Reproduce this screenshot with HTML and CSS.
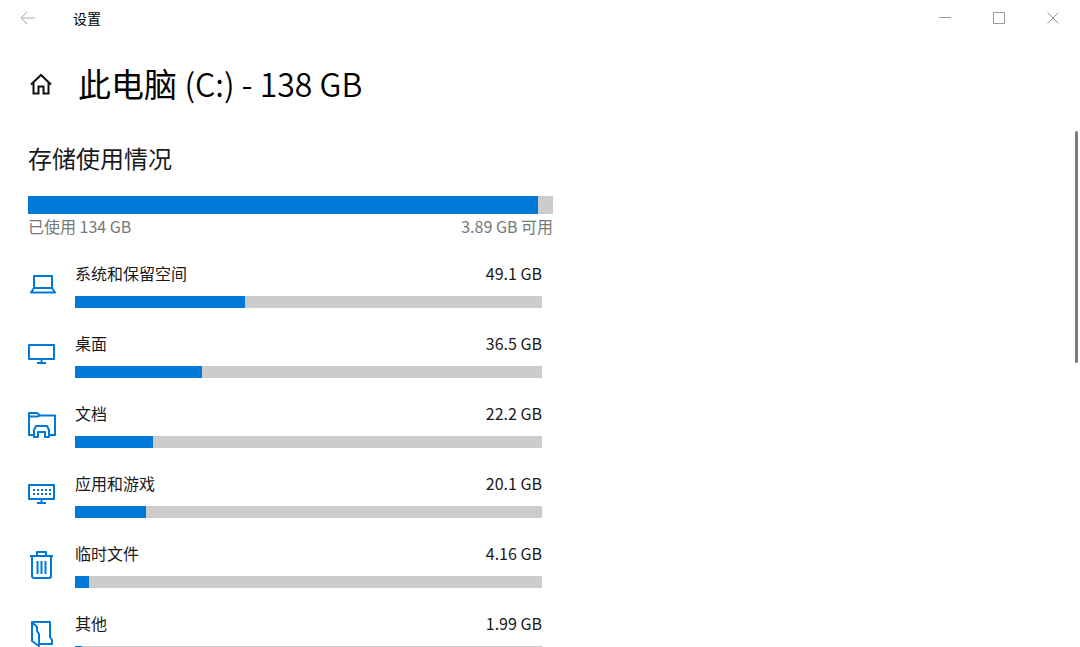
FILE: index.html
```html
<!DOCTYPE html>
<html lang="zh-CN">
<head>
    <meta charset="UTF-8">
    <meta name="viewport" content="width=device-width, initial-scale=1.0">
    <title>设置</title>
    <link rel="stylesheet" href="styles.css">
</head>
<body>
    <header class="titlebar">
        <button class="back" aria-label="返回">
            <svg width="16" height="14" viewBox="0 0 16 14"><path d="M15 7H1M7 1L1 7l6 6"/></svg>
        </button>
        <span class="app-name">设置</span>
        <div class="window-buttons">
            <button aria-label="最小化">
                <svg width="12" height="12" viewBox="0 0 12 12"><path d="M0 5.500h12"/></svg>
            </button>
            <button aria-label="最大化">
                <svg width="12" height="12" viewBox="0 0 12 12"><path d="M.5.5h11v11H.5z"/></svg>
            </button>
            <button aria-label="关闭">
                <svg width="12" height="12" viewBox="0 0 12 12"><path d="M.5.5l11 11M11.500.5l-11 11"/></svg>
            </button>
        </div>
    </header>

    <div class="page-header">
        <a href="#" class="home" aria-label="主页">
            <svg width="22" height="24" viewBox="0 0 22 24"><path d="M1 13.500L11 4l10 9.500M3.500 11.500v11h5v-7h5v7h5v-11"/></svg>
        </a>
        <h1>此电脑 <span class="latin">(C:) - 138 GB</span></h1>
    </div>

    <div class="content">
        <main class="storage">
            <h2>存储使用情况</h2>
            <div class="bar total-bar"><div class="fill" style="width: 97.2%"></div></div>
            <div class="total-text">
                <span>已使用 134 GB</span>
                <span>3.89 GB 可用</span>
            </div>

            <ul class="categories">
                <li>
                    <svg class="icon" width="30" height="30" viewBox="0 0 30 30"><path d="M6 6h18v12H6zM6 18l-3 4.500h24L24 18"/></svg>
                    <div class="category">
                        <div class="category-text"><span>系统和保留空间</span><span>49.1 GB</span></div>
                        <div class="bar"><div class="fill" style="width: 36.5%"></div></div>
                    </div>
                </li>
                <li>
                    <svg class="icon" width="30" height="30" viewBox="0 0 30 30"><path d="M1 5h25v14H1zM13.500 19v3M9 23h9"/></svg>
                    <div class="category">
                        <div class="category-text"><span>桌面</span><span>36.5 GB</span></div>
                        <div class="bar"><div class="fill" style="width: 27.1%"></div></div>
                    </div>
                </li>
                <li>
                    <svg class="icon" width="30" height="30" viewBox="0 0 30 30"><path d="M6 25H1V3h8l3 2.500h15V25h-6M1 6.500h8l3-1M6 27v-7l2-4h11l2 4v7h-4v-5h-7v5z"/></svg>
                    <div class="category">
                        <div class="category-text"><span>文档</span><span>22.2 GB</span></div>
                        <div class="bar"><div class="fill" style="width: 16.7%"></div></div>
                    </div>
                </li>
                <li>
                    <svg class="icon" width="30" height="30" viewBox="0 0 30 30"><path d="M1 5h25v14H1zM13.500 19v3M9 23h9"/><path class="keys" d="M5 10h18M5 14h18"/></svg>
                    <div class="category">
                        <div class="category-text"><span>应用和游戏</span><span>20.1 GB</span></div>
                        <div class="bar"><div class="fill" style="width: 15.1%"></div></div>
                    </div>
                </li>
                <li>
                    <svg class="icon" width="30" height="30" viewBox="0 0 30 30"><path d="M2 6h23M9 6V2h9v4M4 6v20q0 2 2 2h15q2 0 2-2V6M9.500 11v13M13.500 11v13M17.500 11v13"/></svg>
                    <div class="category">
                        <div class="category-text"><span>临时文件</span><span>4.16 GB</span></div>
                        <div class="bar"><div class="fill" style="width: 3.1%"></div></div>
                    </div>
                </li>
                <li>
                    <svg class="icon" width="30" height="30" viewBox="0 0 30 30"><path d="M4 2h18v15l2 3v4H12M4 2v19l7 5V14l-2-3V7z"/></svg>
                    <div class="category">
                        <div class="category-text"><span>其他</span><span>1.99 GB</span></div>
                        <div class="bar"><div class="fill" style="width: 1.5%"></div></div>
                    </div>
                </li>
            </ul>
        </main>
        <div class="scroll-thumb"></div>
    </div>
</body>
</html>
```
FILE: styles.css
```css
* {
    margin: 0;
    padding: 0;
    box-sizing: border-box;
}

body {
    display: flex;
    flex-direction: column;
    height: 100vh;
    overflow: hidden;
    background-color: #fff;
    color: #1a1a1a;
    font-family: "Noto Sans CJK SC", sans-serif;
    font-size: 16px;
}

button {
    border: none;
    background: none;
}

svg {
    display: block;
    flex: none;
    fill: none;
    stroke: currentColor;
}

/* Title bar */
.titlebar {
    display: flex;
    align-items: center;
    flex: none;
    height: 36px;
    padding-left: 20px;
}

.back {
    color: #aaa;
}

.app-name {
    margin-left: 37px;
    font-size: 14px;
    color: #000;
}

.window-buttons {
    display: flex;
    margin-left: auto;
}

.window-buttons button {
    display: flex;
    align-items: center;
    justify-content: center;
    width: 54px;
    height: 36px;
    color: #999;
}

/* Page header */
.page-header {
    display: flex;
    align-items: center;
    flex: none;
    gap: 26px;
    height: 93px;
    margin-bottom: 2px;
    padding-left: 30px;
}

.home {
    color: #111;
}

.home svg {
    stroke-width: 2;
}

h1 {
    font-size: 33px;
    font-weight: 400;
    line-height: 48px;
    color: #000;
}

h1 .latin {
    font-size: 32px;
    font-weight: 350;
}

/* Content */
.content {
    display: flex;
    justify-content: space-between;
    flex: 1;
    min-height: 0;
    padding: 0 2px 0 28px;
    overflow: hidden;
}

.storage {
    flex: 0 1 525px;
    padding-top: 9px;
}

h2 {
    font-size: 24px;
    font-weight: 400;
    line-height: 36px;
    margin-bottom: 20px;
}

.bar {
    height: 12px;
    background-color: #ccc;
}

.fill {
    height: 100%;
    background-color: #0078d7;
}

.total-bar {
    height: 18px;
}

.total-text {
    display: flex;
    justify-content: space-between;
    line-height: 24px;
    color: #777;
}

.categories {
    list-style: none;
    padding: 24px 11px 0 0;
}

.categories li {
    display: flex;
    gap: 17px;
    height: 70px;
}

.icon {
    margin-top: 8px;
    color: #0078d7;
    stroke-width: 2;
    stroke-linejoin: round;
}

.keys {
    stroke-dasharray: 2 2;
}

.category {
    flex: 1;
}

.category-text {
    display: flex;
    justify-content: space-between;
    line-height: 22px;
    margin-bottom: 12px;
}

.scroll-thumb {
    width: 3px;
    height: 45%;
    border-radius: 2px;
    background-color: #7a7a7a;
}
```
